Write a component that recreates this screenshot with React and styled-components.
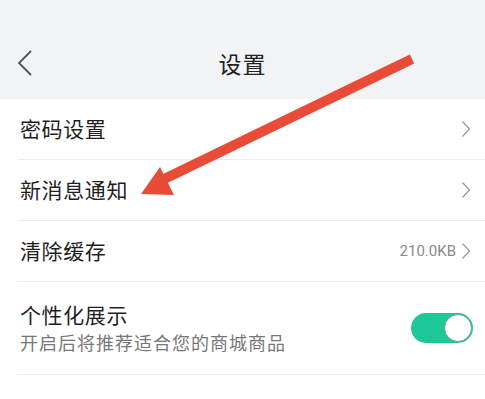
import React from "react";
import styled, { createGlobalStyle } from "styled-components";

const GlobalStyle = createGlobalStyle`
  html, body {
    margin: 0;
    padding: 0;
    background: #ffffff;
    overflow: hidden;
  }
  body {
    font-family: "Noto Sans CJK SC", "Noto Sans", sans-serif;
    color: #222;
  }
`;

const Page = styled.div`
  position: relative;
  width: 485px;
  height: 399px;
  overflow: hidden;
  background: #fff;
`;

const Header = styled.header`
  height: 99px;
  background: #f1f3f4;
  display: grid;
  grid-template-columns: 60px 1fr 60px;
  align-items: center;
  padding-top: 26px;
  box-sizing: border-box;
`;

const BackButton = styled.span`
  display: flex;
  align-items: center;
  padding-left: 16px;
`;

const Title = styled.h1`
  margin: 0;
  text-align: center;
  font-size: 23px;
  font-weight: 400;
  color: #222;
  letter-spacing: 1px;
`;

const List = styled.div`
  display: flex;
  flex-direction: column;
`;

const Row = styled.div`
  height: ${props => props.$h || 61}px;
  margin-left: 18px;
  padding-right: 14px;
  display: flex;
  align-items: ${props => (props.$top ? "flex-start" : "center")};
  padding-top: ${props => (props.$top ? "22px" : "0")};
  justify-content: space-between;
  border-bottom: 1px solid #ededed;
  box-sizing: border-box;
`;

const Texts = styled.div`
  display: flex;
  flex-direction: column;
  padding-left: 2px;
`;

const Label = styled.span`
  font-size: 21px;
  letter-spacing: 0.6px;
  color: #1f1f1f;
  line-height: 1.3;
`;

const Sub = styled.span`
  font-size: 18px;
  letter-spacing: 1px;
  color: #777;
  line-height: 1.4;
  margin-top: 1px;
`;

const Right = styled.span`
  display: flex;
  align-items: center;
  gap: 5px;
  color: #8a8a8a;
  font-family: "Roboto", "Noto Sans", sans-serif;
  font-size: 15px;
`;

const Toggle = styled.span`
  position: relative;
  width: 62px;
  height: 30px;
  border-radius: 15px;
  background: #1ec796;
  display: inline-block;
  margin-right: -2px;
  &::after {
    content: "";
    position: absolute;
    right: 1px;
    top: 1px;
    width: 26px;
    height: 26px;
    border-radius: 50%;
    background: #fff;
    border: 1px solid #6a9e90;
  }
`;

const Arrow = styled.svg`
  position: absolute;
  left: 0;
  top: 0;
  pointer-events: none;
`;

const Chevron = () => (
  <svg width="10" height="18" viewBox="0 0 10 18">
    <path d="M1.5 1.5 L8.5 9 L1.5 16.5" fill="none" stroke="#9a9a9a" strokeWidth="1.3" />
  </svg>
);

const rows = [
  { label: "密码设置" },
  { label: "新消息通知" },
  { label: "清除缓存", value: "210.0KB" },
];

export default function App() {
  return (
    <Page>
      <GlobalStyle />
      <Header>
        <BackButton>
          <svg width="18" height="28" viewBox="0 0 18 28">
            <path d="M15 2 L3 14 L15 26" fill="none" stroke="#555" strokeWidth="1.8" />
          </svg>
        </BackButton>
        <Title>设置</Title>
        <span />
      </Header>
      <List>
        {rows.map(r => (
          <Row key={r.label}>
            <Texts>
              <Label>{r.label}</Label>
            </Texts>
            <Right>
              {r.value}
              <Chevron />
            </Right>
          </Row>
        ))}
        <Row $h={93}>
          <Texts>
            <Label>个性化展示</Label>
            <Sub>开启后将推荐适合您的商城商品</Sub>
          </Texts>
          <Toggle />
        </Row>
        <Row $h={61} $top>
          <Texts>
            <Label>账号与安全</Label>
          </Texts>
        </Row>
      </List>
      <Arrow width="485" height="399" viewBox="0 0 485 399">
        <line x1="412" y1="59" x2="158" y2="182" stroke="#e94c36" strokeWidth="10" strokeLinecap="butt" />
        <polygon points="141,194 160,167 174,195" fill="#e94c36" />
      </Arrow>
    </Page>
  );
}
